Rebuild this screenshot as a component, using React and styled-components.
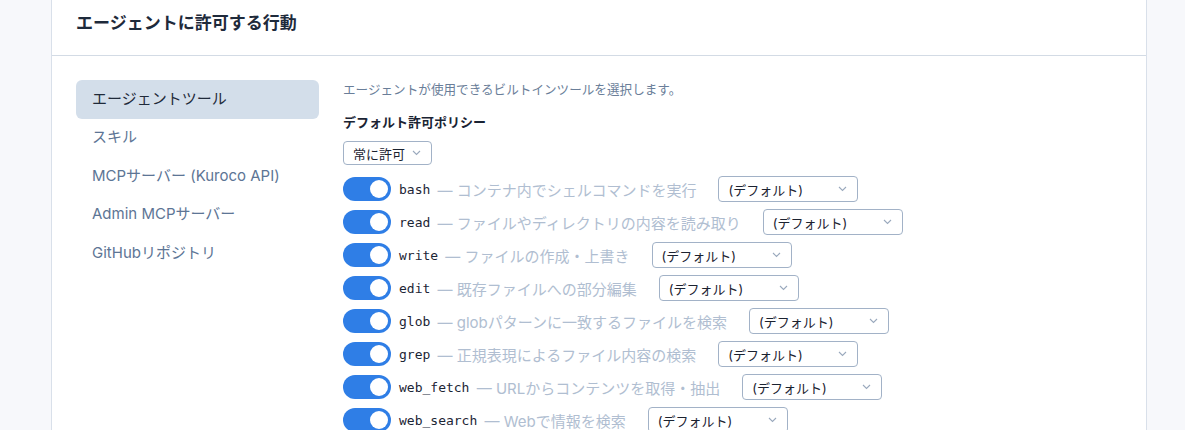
import React from 'react'
import styled, { createGlobalStyle } from 'styled-components';

const GlobalStyle = createGlobalStyle`
  html, body {
    margin: 0;
    padding: 0;
    background: #f7f8fb;
    font-family: Inter, "Noto Sans CJK JP", sans-serif;
  }
`;

const Page = styled.div`
  padding: 0 38px 0 51px;
  height: 430px;
  overflow: hidden;
`;

const Card = styled.div`
  background: #fff;
  border: 1px solid #d9e0ea;
  border-top: none;
  min-height: 430px;
`;

const Header = styled.div`
  height: 56px;
  box-sizing: border-box;
  padding: 10px 24px 0;
  border-bottom: 1px solid #d3dbe5;
`;

const Title = styled.h2`
  margin: 0;
  font-size: 17px;
  line-height: 26px;
  font-weight: 700;
  color: #1e2a3b;
`;

const Body = styled.div`
  display: flex;
  gap: 24px;
  padding: 24px 24px 0;
`;

const Sidebar = styled.ul`
  list-style: none;
  margin: 0;
  padding: 0;
  width: 243px;
  flex-shrink: 0;
  display: flex;
  flex-direction: column;
`;

const SideItem = styled.li`
  height: 38.5px;
  box-sizing: border-box;
  display: flex;
  align-items: center;
  padding: 0 16px 4px;
  border-radius: 6px;
  font-size: 15px;
  color: ${p => (p.$active ? '#1f2a3a' : '#5d7595')};
  background: ${p => (p.$active ? '#d3deea' : 'transparent')};
`;

const Content = styled.div`
  flex: 1;
`;

const Lead = styled.p`
  margin: 0;
  padding-top: 1px;
  font-size: 12.6px;
  line-height: 18px;
  color: #6a7e99;
`;

const Label = styled.div`
  margin-top: 14px;
  font-size: 13px;
  font-weight: 700;
  line-height: 18px;
  color: #1a2333;
`;

const Select = styled.div`
  display: inline-flex;
  align-items: center;
  justify-content: space-between;
  box-sizing: border-box;
  width: ${p => p.$w}px;
  height: ${p => p.$h}px;
  padding: 0 10px 0 9px;
  border: 1px solid #a2b2c7;
  border-radius: 4px;
  background: #fff;
  font-size: 13px;
  color: #1b2230;
  flex-shrink: 0;
`;

const PolicyRow = styled.div`
  margin-top: 10px;
  margin-bottom: 11px;
`;

const ToolList = styled.div`
  display: flex;
  flex-direction: column;
  gap: 7px;
`;

const ToolRow = styled.div`
  display: flex;
  align-items: center;
  height: 26px;
`;

const Toggle = styled.span`
  width: 48px;
  height: 24px;
  border-radius: 12px;
  background: #2f7ee6;
  position: relative;
  flex-shrink: 0;
  margin-right: 8px;

  &::after {
    content: '';
    position: absolute;
    right: 3px;
    top: 3px;
    width: 18px;
    height: 18px;
    border-radius: 50%;
    background: #fff;
  }
`;

const Name = styled.code`
  font-family: "DejaVu Sans Mono", "Liberation Mono", monospace;
  font-size: 13px;
  color: #1c2535;
`;

const Desc = styled.span`
  font-size: 15px;
  color: #b0bed1;
  padding-left: 3px;
  margin-right: 22px;
  white-space: nowrap;
`;

const Chevron = () => (
  <svg width="9" height="6" viewBox="0 0 9 6" fill="none">
    <path d="M1 1l3.5 3.5L8 1" stroke="#9aa9bd" strokeWidth="1.1" />
  </svg>
);

const tools = [
  ['bash', 'コンテナ内でシェルコマンドを実行'],
  ['read', 'ファイルやディレクトリの内容を読み取り'],
  ['write', 'ファイルの作成・上書き'],
  ['edit', '既存ファイルへの部分編集'],
  ['glob', 'globパターンに一致するファイルを検索'],
  ['grep', '正規表現によるファイル内容の検索'],
  ['web_fetch', 'URLからコンテンツを取得・抽出'],
  ['web_search', 'Webで情報を検索'],
];

const menu = ['エージェントツール', 'スキル', 'MCPサーバー (Kuroco API)', 'Admin MCPサーバー', 'GitHubリポジトリ'];

export default function App() {
  return (
    <>
      <GlobalStyle />
      <Page>
        <Card>
          <Header>
            <Title>エージェントに許可する行動</Title>
          </Header>
          <Body>
            <Sidebar>
              {menu.map((m, i) => (
                <SideItem key={m} $active={i === 0}>{m}</SideItem>
              ))}
            </Sidebar>
            <Content>
              <Lead>エージェントが使用できるビルトインツールを選択します。</Lead>
              <Label>デフォルト許可ポリシー</Label>
              <PolicyRow>
                <Select $w={89} $h={24}>常に許可<Chevron /></Select>
              </PolicyRow>
              <ToolList>
                {tools.map(([name, desc]) => (
                  <ToolRow key={name}>
                    <Toggle />
                    <Name>{name}</Name>
                    <Desc>&nbsp;— {desc}</Desc>
                    <Select $w={140} $h={26}>(デフォルト)<Chevron /></Select>
                  </ToolRow>
                ))}
              </ToolList>
            </Content>
          </Body>
        </Card>
      </Page>
    </>
  )
}
